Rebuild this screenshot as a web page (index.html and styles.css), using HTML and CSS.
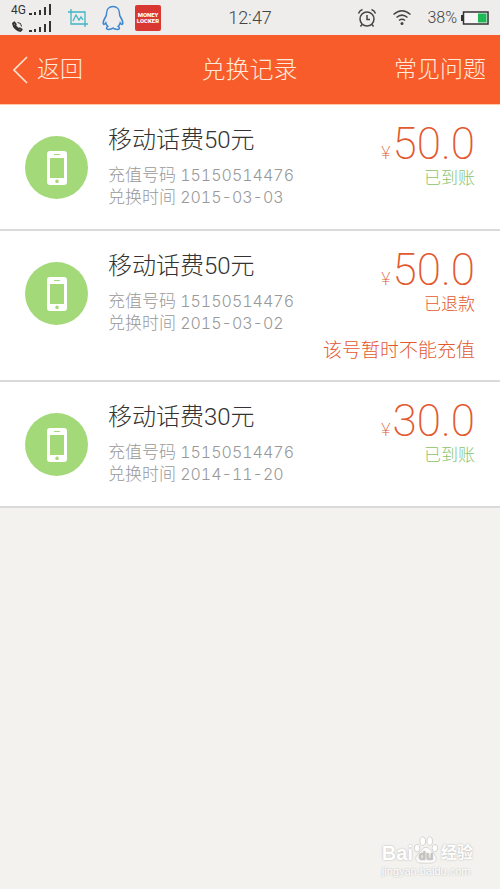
FILE: index.html
```
<!DOCTYPE html>
<html lang="zh-CN">

<head>

    <title>兑换记录</title>

    <meta charset="UTF-8">
    <meta name="viewport" content="width=device-width, initial-scale=1.0">

    <link rel="stylesheet" href="styles.css">

</head>

<body>

    <!-- Shared icons -->
    <svg class="sprite" aria-hidden="true">
        <symbol id="phone" viewBox="0 0 20 34">
            <path fill="#fff" fill-rule="evenodd" d="M3 0h14a3 3 0 0 1 3 3v28a3 3 0 0 1-3 3H3a3 3 0 0 1-3-3V3a3 3 0 0 1 3-3zM3 7v20h14V7zM7 3v1h6V3zM10 28.500a1.800 1.800 0 1 0 .01 0z"/>
        </symbol>
        <symbol id="signal" viewBox="0 0 24 12">
            <path fill="#333" d="M0 9h3v2H0zM5 8h2v3H5zM10 6h2v5h-2zM15 3h2v8h-2zM20 0h2v11h-2z"/>
        </symbol>
    </svg>

    <!-- STATUS BAR -->
    <div class="status-bar">
        <div class="status-left">
            <div class="sims">
                <div class="sim">
                    <span>4G</span>
                    <svg width="24" height="12"><use href="#signal"/></svg>
                </div>
                <div class="sim">
                    <svg width="12" height="12" viewBox="0 0 12 12" fill="none" stroke="#333">
                        <path stroke-width="1.800" stroke-linejoin="round" d="M2 2.500C2.500 6 5.500 9.500 9.500 10L10.800 8.600 8.800 7.200 7.300 8 4.200 4.800 4.800 3.300 3.300 1.300z"/>
                        <path d="M6.500 1.500a4 4 0 0 1 4 4"/>
                    </svg>
                    <svg width="24" height="12"><use href="#signal"/></svg>
                </div>
            </div>
            <svg class="crop-icon" width="20" height="18" viewBox="0 0 20 18" fill="none" stroke="#3fb4c6" stroke-width="1.300">
                <path d="M0 3h17v15M3 0v15h17M5 12l3-6 3 5 2-3 2 3"/>
            </svg>
            <svg class="qq-icon" width="22" height="26" viewBox="0 0 22 26" fill="none" stroke="#3d86cf" stroke-width="1.500">
                <path d="M11 1.500C7 1.500 4.500 4.500 4.500 8.500c0 1.500-.3 2.500-1 3.500C2 14.500 1 16.500 1.200 18.500c.2 1.500 1.500 1 2.600-.700.4 1.700 1 2.700 2 3.600-1.800 1-1.800 3 .7 3 2 0 3.500-.4 4.500-1.200 1 .8 2.500 1.200 4.500 1.200 2.500 0 2.500-2 .7-3 1-.9 1.600-1.900 2-3.600 1.100 1.700 2.400 2.200 2.600.7.200-2-.8-4-2.300-6.500-.7-1-1-2-1-3.500 0-4-2.500-7-6.500-7z"/>
            </svg>
            <div class="locker"><span>MONEY</span><span>LOCKER</span></div>
        </div>

        <div class="clock">12:47</div>

        <div class="status-right">
            <svg width="20" height="20" viewBox="0 0 20 20" fill="none" stroke="#444" stroke-width="1.500">
                <circle cx="10" cy="11" r="7"/>
                <path d="M10 7v4.500h3M1.500 5.500Q2.500 2.500 5.500 1.500M18.500 5.500Q17.500 2.500 14.500 1.500M5 16.500l-1.500 2M15 16.500l1.500 2"/>
            </svg>
            <svg class="wifi" width="20" height="17" viewBox="0 0 20 17" fill="none" stroke="#444" stroke-width="1.500">
                <path d="M1.500 5.500Q10-2 18.500 5.500M4.500 8.500Q10 3.700 15.500 8.500M7 11.500Q10 9 13 11.500"/>
                <circle cx="10" cy="14.500" r="1.500" fill="#444" stroke="none"/>
            </svg>
            <span class="percent">38%</span>
            <svg width="28" height="14" viewBox="0 0 28 14">
                <path fill="#333" d="M0 4h2v6H0z"/>
                <rect x="2.500" y="1" width="24.500" height="12" fill="#f6f6f6" stroke="#333" stroke-width="1.500"/>
                <path fill="#1fb955" d="M17 2.500h8.500v9H17z"/>
            </svg>
        </div>
    </div>

    <!-- NAV BAR -->
    <header class="nav">
        <button class="back" type="button">
            <svg width="15" height="28" viewBox="0 0 15 28" fill="none" stroke="#ffe3d0" stroke-width="1.600">
                <path d="M14 1L1 14l13 13"/>
            </svg>
            返回
        </button>
        <h1>兑换记录</h1>
        <a class="faq" href="#">常见问题</a>
    </header>

    <!-- EXCHANGE RECORDS -->
    <main class="records">
        <article class="record">
            <div class="badge"><svg width="20" height="34"><use href="#phone"/></svg></div>
            <div class="info">
                <h2>移动话费50元</h2>
                <p>充值号码 <span>15150514476</span></p>
                <p>兑换时间 <span>2015-03-03</span></p>
            </div>
            <div class="amount">
                <p class="price"><span>¥</span>50.0</p>
                <p class="state done">已到账</p>
            </div>
        </article>

        <article class="record">
            <div class="badge"><svg width="20" height="34"><use href="#phone"/></svg></div>
            <div class="info">
                <h2>移动话费50元</h2>
                <p>充值号码 <span>15150514476</span></p>
                <p>兑换时间 <span>2015-03-02</span></p>
            </div>
            <div class="amount">
                <p class="price"><span>¥</span>50.0</p>
                <p class="state">已退款</p>
            </div>
            <p class="note">该号暂时不能充值</p>
        </article>

        <article class="record">
            <div class="badge"><svg width="20" height="34"><use href="#phone"/></svg></div>
            <div class="info">
                <h2>移动话费30元</h2>
                <p>充值号码 <span>15150514476</span></p>
                <p>兑换时间 <span>2014-11-20</span></p>
            </div>
            <div class="amount">
                <p class="price"><span>¥</span>30.0</p>
                <p class="state done">已到账</p>
            </div>
        </article>
    </main>

    <!-- WATERMARK -->
    <div class="watermark">
        <div class="logo">
            <span>Bai</span>
            <svg width="26" height="28" viewBox="0 0 26 30" fill="#fff" stroke="#d2d1ce">
                <ellipse cx="3.500" cy="13" rx="3" ry="4"/>
                <ellipse cx="9.500" cy="5.500" rx="3" ry="4.500"/>
                <ellipse cx="17" cy="5.500" rx="3" ry="4.500"/>
                <ellipse cx="22.500" cy="13" rx="3" ry="4"/>
                <path d="M13 12c-3 0-4.500 3-7 5.500-4 4-4.500 6-3.500 8.500 1.500 3.500 5 3 10.500 3s9 .5 10.500-3c1-2.500.5-4.500-3.500-8.500C17.500 15 16 12 13 12z"/>
                <text class="du" x="13" y="26" text-anchor="middle">du</text>
            </svg>
            <span class="jingyan">经验</span>
        </div>
        <div class="site">jingyan.baidu.com</div>
    </div>

</body>

</html>
```
FILE: styles.css
```
* {
    padding: 0;
    margin: 0;
    box-sizing: border-box;
}
body {
    position: relative;
    min-height: 100vh;
    background-color: #f3f2ee;
    font-family: Roboto, "Noto Sans CJK SC", sans-serif;
    font-weight: 300;
}
svg {
    display: block;
    flex: none;
}
.sprite {
    position: absolute;
    width: 0;
    height: 0;
}

/* Status bar */
.status-bar {
    display: grid;
    grid-template-columns: 1fr auto 1fr;
    align-items: center;
    height: 35px;
    padding: 0 11px;
    background-color: #eeedec;
    color: #444;
}
.status-left, .status-right {
    display: flex;
    align-items: center;
}
.status-right {
    justify-content: flex-end;
}
.sims {
    display: grid;
    gap: 5px;
    width: 42px;
    padding-top: 2px;
}
.sim {
    display: flex;
    justify-content: space-between;
    align-items: center;
    height: 12px;
    color: #333;
    font-size: 12px;
    font-weight: 400;
    line-height: 12px;
}
.crop-icon {
    margin-left: 15px;
}
.qq-icon {
    margin-left: 14px;
}
.locker {
    display: flex;
    flex-direction: column;
    justify-content: center;
    width: 26px;
    height: 26px;
    margin-left: 11px;
    border-radius: 2px;
    background-color: #d93732;
    color: white;
    font-size: 6px;
    font-weight: 900;
    line-height: 6px;
    text-align: center;
}
.clock {
    font-size: 18px;
    line-height: 24px;
}
.wifi {
    margin: 0 15px;
}
.percent {
    margin-right: 4px;
    font-size: 16px;
    line-height: 24px;
}

/* Nav bar */
.nav {
    display: grid;
    grid-template-columns: 1fr auto 1fr;
    align-items: center;
    height: 70px;
    padding: 1px 14px 0 13px;
    border-bottom: 1px solid #ffc8a6;
    background-color: #f95c2b;
    color: #ffe9da;
    font-size: 23px;
    line-height: 32px;
}
.nav h1 {
    font-size: 24px;
    font-weight: 300;
}
.back {
    display: flex;
    align-items: center;
    gap: 9px;
    justify-self: start;
    border: none;
    background: none;
    color: inherit;
    font: inherit;
    cursor: pointer;
}
.faq {
    justify-self: end;
    color: inherit;
    text-decoration: none;
}

/* Records */
.record {
    display: grid;
    grid-template-columns: 63px 1fr auto;
    column-gap: 20px;
    padding: 17px 25px;
    border-bottom: 2px solid #dadada;
    background-color: white;
}
.badge {
    display: flex;
    align-items: center;
    justify-content: center;
    width: 63px;
    height: 63px;
    margin-top: 14px;
    border-radius: 50%;
    background-color: #a4d97a;
}
.info {
    padding-bottom: 4px;
}
.info h2 {
    margin-bottom: 6px;
    color: #333;
    font-size: 24px;
    font-weight: 300;
    line-height: 36px;
}
.info p {
    color: #999;
    font-size: 17px;
    line-height: 22px;
}
.info p span {
    font-family: Inter, sans-serif;
    font-size: 16px;
    font-variant-numeric: tabular-nums;
}
.amount {
    color: #e2592f;
    text-align: right;
}
.price {
    font-size: 44px;
    font-weight: 200;
    line-height: 44px;
}
.price span {
    margin-right: 2px;
    font-size: 18px;
    line-height: 18px;
}
.state {
    font-size: 17px;
    line-height: 24px;
}
.done {
    color: #8cc468;
}
.note {
    grid-column: 1 / -1;
    color: #e2592f;
    font-size: 19px;
    line-height: 25px;
    text-align: right;
}

/* Watermark */
.watermark {
    position: absolute;
    right: 27px;
    bottom: 11px;
    color: white;
    text-shadow: 0 0 2px #aaa;
}
.logo {
    display: flex;
    align-items: flex-end;
    font: 700 20px/22px "Liberation Sans", "Noto Sans CJK SC", sans-serif;
}
.logo .jingyan {
    margin-left: 2px;
    font-size: 16px;
}
.du {
    fill: #c4c3c0;
    stroke: none;
    font-size: 13px;
}
.site {
    font: 400 11px/14px "Liberation Sans", sans-serif;
}
```
